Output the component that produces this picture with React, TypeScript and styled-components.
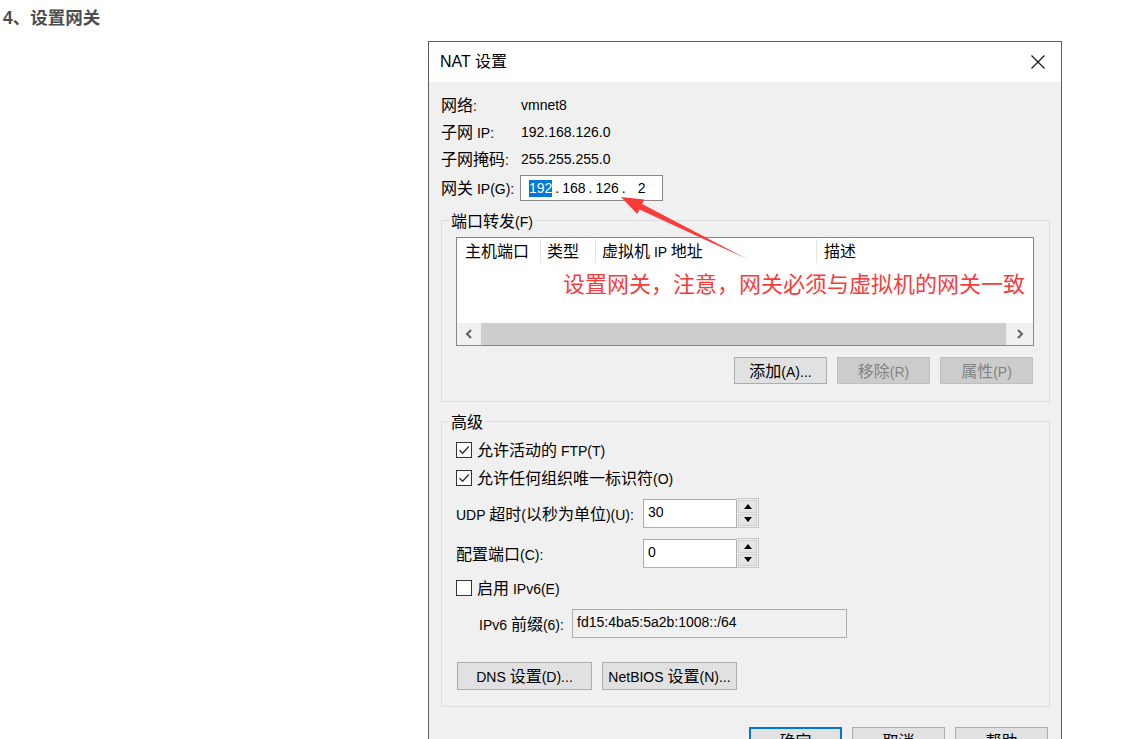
import React from "react";
import styled, { createGlobalStyle } from "styled-components";

const Global = createGlobalStyle`
  html, body { margin: 0; padding: 0; background: #fff; overflow: hidden; }
  body {
    font-family: "Liberation Sans", "Noto Sans CJK SC", sans-serif;
    font-size: 14px;
    color: #000;
  }
  * { box-sizing: border-box; }
`;

const HAN_RE = /[\u3000-\u303f\u4e00-\u9fff\uff00-\uffef]/;
const Han = styled.span`
  font-family: "Noto Sans CJK SC", sans-serif;
  font-size: 16px;
`;
const Run = styled.span`
  white-space: pre;
`;
function mix(s: string) {
  return (
    <Run>
      {s
        .split(/([\u3000-\u303f\u4e00-\u9fff\uff00-\uffef]+)/)
        .filter(Boolean)
        .map((p, i) =>
          HAN_RE.test(p) ? <Han key={i}>{p}</Han> : <React.Fragment key={i}>{p}</React.Fragment>
        )}
    </Run>
  );
}

const Page = styled.div`
  width: 1126px;
  height: 739px;
  overflow: hidden;
  padding-top: 8px;
`;

const Heading = styled.h4`
  margin: 0 0 0 3px;
  font-size: 17.5px;
  line-height: 20px;
  font-weight: 700;
  color: #4d4d4d;
`;

const Dialog = styled.div`
  position: relative;
  margin: 13px 0 0 428px;
  width: 634px;
  border: 1px solid #5f5f5f;
  background: #f0f0f0;
  line-height: 20px;
`;

const TitleBar = styled.div`
  height: 40px;
  background: #fff;
  display: flex;
  align-items: center;
  justify-content: space-between;
  padding: 0 16px 0 11px;
  font-size: 16px;
`;

const Body = styled.div`
  padding: 9px 11px 0 12px;
  display: flex;
  flex-direction: column;
`;

const InfoRow = styled.div`
  display: flex;
  align-items: center;
  height: 27px;
`;

const GatewayRow = styled.div`
  display: flex;
  align-items: center;
  height: 26px;
  margin-top: 3px;
`;

const InfoLabel = styled.div<{ $w: number }>`
  width: ${(p) => p.$w}px;
  flex: none;
`;

const IpBox = styled.div`
  width: 143px;
  height: 26px;
  border: 1px solid #8a8a8a;
  background: #fff;
  display: flex;
  align-items: center;
  gap: 3px;
  padding-left: 8px;
`;

const Octet = styled.span<{ $sel?: boolean; $ml?: number }>`
  line-height: 17px;
  background: ${(p) => (p.$sel ? "#0078d7" : "transparent")};
  color: ${(p) => (p.$sel ? "#fff" : "#000")};
  margin-left: ${(p) => p.$ml ?? 0}px;
`;

const Group = styled.div<{ $mt: number; $pb: number }>`
  border: 1px solid #dcdcdc;
  display: flex;
  flex-direction: column;
  margin-top: ${(p) => p.$mt}px;
  padding: 0 14px ${(p) => p.$pb}px 14px;
`;

const Legend = styled.div`
  align-self: flex-start;
  margin: -10px 0 0 -7px;
  padding: 0 2px;
  height: 18px;
  line-height: 18px;
  background: #f0f0f0;
`;

const ListBox = styled.div`
  margin-top: 8px;
  width: 578px;
  height: 109px;
  border: 1px solid #828790;
  background: #fff;
  display: flex;
  flex-direction: column;
`;

const ListHeader = styled.div`
  height: 26px;
  display: flex;
  align-items: center;
`;

const HeadCell = styled.div<{ $w?: number; $pl: number; $last?: boolean }>`
  ${(p) => (p.$w ? `width: ${p.$w}px; flex: none;` : "flex: 1;")}
  height: 24px;
  display: flex;
  align-items: center;
  padding-left: ${(p) => p.$pl}px;
  border-right: ${(p) => (p.$last ? "none" : "1px solid #e5e5e5")};
`;

const ListSpace = styled.div`
  flex: 1;
`;

const HScroll = styled.div`
  height: 22px;
  display: flex;
  background: #f0f0f0;
`;

const ScrollArrow = styled.div<{ $w: number }>`
  width: ${(p) => p.$w}px;
  flex: none;
  display: flex;
  align-items: center;
  justify-content: center;
`;

const Thumb = styled.div`
  flex: 1;
  background: #cdcdcd;
`;

const ButtonRow = styled.div<{ $mt: number; $justify: string; $gap: number; $pr?: number; $pl?: number }>`
  display: flex;
  justify-content: ${(p) => p.$justify};
  gap: ${(p) => p.$gap}px;
  margin-top: ${(p) => p.$mt}px;
  padding-right: ${(p) => p.$pr ?? 0}px;
  padding-left: ${(p) => p.$pl ?? 0}px;
`;

const Button = styled.div<{ $w: number; $h?: number; $disabled?: boolean; $default?: boolean }>`
  width: ${(p) => p.$w}px;
  height: ${(p) => p.$h ?? 27}px;
  flex: none;
  display: flex;
  align-items: center;
  justify-content: center;
  background: ${(p) => (p.$disabled ? "#cccccc" : "#e1e1e1")};
  border: 1px solid ${(p) => (p.$disabled ? "#bfbfbf" : p.$default ? "#0078d7" : "#adadad")};
  box-shadow: ${(p) => (p.$default ? "inset 0 0 0 1px #0078d7" : "none")};
  color: ${(p) => (p.$disabled ? "#838383" : "#000")};
`;

const CheckRow = styled.div<{ $mt: number }>`
  display: flex;
  align-items: center;
  gap: 5px;
  height: 28px;
  margin-top: ${(p) => p.$mt}px;
`;

const CheckBox = styled.div`
  width: 16px;
  height: 16px;
  border: 1px solid #333;
  background: #fff;
  display: flex;
  align-items: center;
  justify-content: center;
`;

const FieldRow = styled.div<{ $mt: number; $pl?: number }>`
  display: flex;
  align-items: center;
  height: 29px;
  margin-top: ${(p) => p.$mt}px;
  padding-left: ${(p) => p.$pl ?? 0}px;
`;

const FieldLabel = styled.div<{ $w: number }>`
  width: ${(p) => p.$w}px;
  flex: none;
`;

const TextBox = styled.div<{ $w: number; $disabled?: boolean }>`
  width: ${(p) => p.$w}px;
  height: 29px;
  border: 1px solid #adadad;
  background: ${(p) => (p.$disabled ? "#f0f0f0" : "#fff")};
  padding: 3px 0 0 4px;
  line-height: 18px;
`;

const SpinCol = styled.div`
  width: 22px;
  height: 30px;
  margin-top: -1px;
  border: 1px solid #c8c8c8;
  border-left: none;
  padding: 1px;
  display: flex;
  flex-direction: column;
  gap: 1px;
  background: #f0f0f0;
`;

const SpinBtn = styled.div`
  flex: 1;
  background: #e5e5e5;
  border: 1px solid #cfcfcf;
  display: flex;
  align-items: center;
  justify-content: center;
`;

const Annotation = styled.div`
  position: absolute;
  left: 134px;
  top: 228px;
  font-family: "Noto Sans CJK SC", sans-serif;
  font-size: 22px;
  line-height: 24px;
  color: #fa3b3b;
  white-space: nowrap;
`;

const ArrowSvg = styled.svg`
  position: absolute;
  left: 171px;
  top: 143px;
`;

const Close = () => (
  <svg width="14" height="14" viewBox="0 0 14 14">
    <path d="M0.5 0.5 L13.5 13.5 M13.5 0.5 L0.5 13.5" stroke="#111" strokeWidth="1.1" fill="none" />
  </svg>
);

const Check = () => (
  <svg width="12" height="12" viewBox="0 0 12 12">
    <path d="M1.5 6.2 L4.6 9.3 L10.8 2.6" stroke="#333" strokeWidth="1.4" fill="none" />
  </svg>
);

const Chevron = ({ dir }: { dir: "l" | "r" }) => (
  <svg width="8" height="10" viewBox="0 0 8 10">
    <path
      d={dir === "l" ? "M6 1 L2 5 L6 9" : "M2 1 L6 5 L2 9"}
      stroke="#606060"
      strokeWidth="2"
      fill="none"
    />
  </svg>
);

const Tri = ({ up }: { up?: boolean }) => (
  <svg width="8" height="5" viewBox="0 0 8 5">
    <path d={up ? "M0 5 L4 0 L8 5 Z" : "M0 0 L8 0 L4 5 Z"} fill="#000" />
  </svg>
);

function Spinner({ value }: { value: string }) {
  return (
    <>
      <TextBox $w={94}>{value}</TextBox>
      <SpinCol>
        <SpinBtn>
          <Tri up />
        </SpinBtn>
        <SpinBtn>
          <Tri />
        </SpinBtn>
      </SpinCol>
    </>
  );
}

export default function App() {
  return (
    <Page>
      <Global />
      <Heading>4、设置网关</Heading>
      <Dialog>
        <TitleBar>
          <span>NAT 设置</span>
          <Close />
        </TitleBar>
        <Body>
          <InfoRow>
            <InfoLabel $w={80}>{mix("网络:")}</InfoLabel>
            <span>vmnet8</span>
          </InfoRow>
          <InfoRow>
            <InfoLabel $w={80}>{mix("子网 IP:")}</InfoLabel>
            <span>192.168.126.0</span>
          </InfoRow>
          <InfoRow>
            <InfoLabel $w={80}>{mix("子网掩码:")}</InfoLabel>
            <span>255.255.255.0</span>
          </InfoRow>
          <GatewayRow>
            <InfoLabel $w={79}>{mix("网关 IP(G):")}</InfoLabel>
            <IpBox>
              <Octet $sel>192</Octet>
              <Octet>.</Octet>
              <Octet>168</Octet>
              <Octet>.</Octet>
              <Octet>126</Octet>
              <Octet>.</Octet>
              <Octet $ml={9}>2</Octet>
            </IpBox>
          </GatewayRow>

          <Group $mt={19} $pb={17}>
            <Legend>{mix("端口转发(F)")}</Legend>
            <ListBox>
              <ListHeader>
                <HeadCell $w={84} $pl={8}>{mix("主机端口")}</HeadCell>
                <HeadCell $w={55} $pl={6}>{mix("类型")}</HeadCell>
                <HeadCell $w={221} $pl={6}>{mix("虚拟机 IP 地址")}</HeadCell>
                <HeadCell $pl={7} $last>{mix("描述")}</HeadCell>
              </ListHeader>
              <ListSpace />
              <HScroll>
                <ScrollArrow $w={24}>
                  <Chevron dir="l" />
                </ScrollArrow>
                <Thumb />
                <ScrollArrow $w={27}>
                  <Chevron dir="r" />
                </ScrollArrow>
              </HScroll>
            </ListBox>
            <ButtonRow $mt={11} $justify="flex-end" $gap={10} $pr={2}>
              <Button $w={93}>{mix("添加(A)...")}</Button>
              <Button $w={93} $disabled>{mix("移除(R)")}</Button>
              <Button $w={93} $disabled>{mix("属性(P)")}</Button>
            </ButtonRow>
          </Group>

          <Group $mt={19} $pb={16}>
            <Legend>{mix("高级")}</Legend>
            <CheckRow $mt={6}>
              <CheckBox>
                <Check />
              </CheckBox>
              {mix("允许活动的 FTP(T)")}
            </CheckRow>
            <CheckRow $mt={0}>
              <CheckBox>
                <Check />
              </CheckBox>
              {mix("允许任何组织唯一标识符(O)")}
            </CheckRow>
            <FieldRow $mt={7}>
              <FieldLabel $w={187}>{mix("UDP 超时(以秒为单位)(U):")}</FieldLabel>
              <Spinner value="30" />
            </FieldRow>
            <FieldRow $mt={11}>
              <FieldLabel $w={187}>{mix("配置端口(C):")}</FieldLabel>
              <Spinner value="0" />
            </FieldRow>
            <CheckRow $mt={6}>
              <CheckBox />
              {mix("启用 IPv6(E)")}
            </CheckRow>
            <FieldRow $mt={7} $pl={23}>
              <FieldLabel $w={93}>{mix("IPv6 前缀(6):")}</FieldLabel>
              <TextBox $w={275} $disabled>
                fd15:4ba5:5a2b:1008::/64
              </TextBox>
            </FieldRow>
            <ButtonRow $mt={24} $justify="flex-start" $gap={10} $pl={1}>
              <Button $w={135} $h={28}>{mix("DNS 设置(D)...")}</Button>
              <Button $w={135} $h={28}>{mix("NetBIOS 设置(N)...")}</Button>
            </ButtonRow>
          </Group>

          <ButtonRow $mt={20} $justify="flex-end" $gap={10} $pr={2}>
            <Button $w={93} $h={28} $default>{mix("确定")}</Button>
            <Button $w={93} $h={28}>{mix("取消")}</Button>
            <Button $w={93} $h={28}>{mix("帮助")}</Button>
          </ButtonRow>
        </Body>

        <Annotation>设置网关，注意，网关必须与虚拟机的网关一致</Annotation>
        <ArrowSvg width="160" height="85" viewBox="0 0 160 85">
          <polygon
            points="21,12 44.3,14.5 42.1,19 147,74 39.5,24.4 37.3,28.9"
            fill="#fa3b3b"
          />
        </ArrowSvg>
      </Dialog>
    </Page>
  );
}
